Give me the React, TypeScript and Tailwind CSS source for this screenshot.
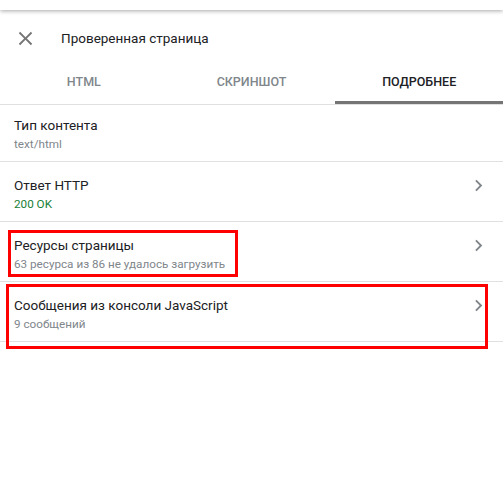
import { ReactNode } from 'react';

const ChevronRight = () => (
    <svg width="23" height="23" viewBox="0 0 24 24" className="shrink-0 fill-[#80868b]">
        <path d="M10 6L8.59 7.41 13.17 12l-4.58 4.59L10 18l6-6z" />
    </svg>
);

const CloseIcon = () => (
    <svg width="23" height="23" viewBox="0 0 24 24" className="fill-[#757575]">
        <path d="M19 6.41L17.59 5 12 10.59 6.41 5 5 6.41 10.59 12 5 17.59 6.41 19 12 13.41 17.59 19 19 17.59 13.41 12z" />
    </svg>
);

interface RowProps {
    title: string;
    sub: ReactNode;
    subClass?: string;
    arrow?: boolean;
    first?: boolean;
    children?: ReactNode;
}

const DetailRow = ({ title, sub, subClass, arrow, first, children }: RowProps) => (
    <div
        className={`${
            first ? 'h-[57px] pt-[10px]' : 'h-[60px] pt-[13px]'
        } relative flex items-start border-b border-[#e0e0e0] pl-[14px] pr-[13px]`}
    >
        <div className="flex flex-1 flex-col">
            <span className="text-[13.5px] leading-[20px] text-[#202124]">{title}</span>
            <span className={`text-[11.7px] leading-[18px] ${subClass || 'text-[#80868b]'}`}>{sub}</span>
        </div>
        {arrow && (
            <div className="flex self-stretch items-center pb-[13px] -mt-[13px]">
                <ChevronRight />
            </div>
        )}
        {children}
    </div>
);

const App = () => {
    const tabs = ['HTML', 'СКРИНШОТ', 'ПОДРОБНЕЕ'];
    return (
        <div className="h-[495px] w-[503px] overflow-hidden bg-white font-['Roboto',sans-serif]">
            <div className="relative z-10 h-[10px] bg-white shadow-[0_1px_4px_rgba(0,0,0,0.35)]" />
            <div className="flex h-[50px] items-center pt-[6px] pl-[14px]">
                <CloseIcon />
                <span className="ml-[24px] text-[13.5px] text-[#202124]">Проверенная страница</span>
            </div>
            <div className="flex h-[45px] border-b border-[#e0e0e0]">
                {tabs.map((t, i) => (
                    <div
                        key={t}
                        className={`${
                            i === 2 ? 'border-[#757575] text-[#202124]' : 'border-transparent text-[#80868b]'
                        } flex flex-1 items-center justify-center border-b-[3px] pt-[3px] text-[12.5px] font-medium`}
                    >
                        {t}
                    </div>
                ))}
            </div>
            <DetailRow first title="Тип контента" sub="text/html" />
            <DetailRow arrow title="Ответ HTTP" sub="200 OK" subClass="text-[#188038]" />
            <DetailRow arrow title="Ресурсы страницы" sub="63 ресурса из 86 не удалось загрузить">
                <div className="pointer-events-none absolute left-[8px] top-[8px] h-[47px] w-[230px] border-[3px] border-[#ff0000]" />
            </DetailRow>
            <DetailRow arrow title="Сообщения из консоли JavaScript" sub="9 сообщений">
                <div className="pointer-events-none absolute left-[6px] top-[2px] h-[65px] w-[482px] border-[3px] border-[#ff0000]" />
            </DetailRow>
        </div>
    );
};

export default App;
